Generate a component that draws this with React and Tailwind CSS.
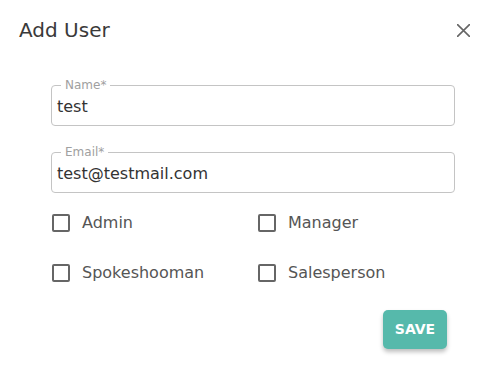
export default function App() {
  const roles = ['Admin', 'Manager', 'Spokeshooman', 'Salesperson'];

  return (
    <div className="w-[491px] h-[369px] bg-white font-['DejaVu_Sans',sans-serif] text-[#333]">
      {/* Header */}
      <div className="flex items-center justify-between pl-[19px] pr-[21px] pt-[16px]">
        <h2 className="text-[20px] leading-[28px] font-normal text-[#3a3a3a]">Add User</h2>
        <button type="button" className="w-[13px] h-[13px] flex items-center justify-center">
          <svg width="13" height="13" viewBox="0 0 13 13">
            <path d="M0.5 0.5 L12.5 12.5 M12.5 0.5 L0.5 12.5" stroke="#666" strokeWidth="1.6" strokeLinecap="round" />
          </svg>
        </button>
      </div>

      {/* Form */}
      <div className="pl-[51px] pr-[36px] pt-[41px]">
        <div className="relative h-[41px] border border-[#c4c4c4] rounded-[4px] flex items-center pl-[5px]">
          <span className="absolute left-[9px] -top-[8px] bg-white px-[4px] text-[12px] leading-[14px] text-[#a0a0a0]">Name*</span>
          <span className="text-[16px] leading-[20px] mt-[2px]">test</span>
        </div>

        <div className="relative h-[41px] mt-[26px] border border-[#c4c4c4] rounded-[4px] flex items-center pl-[5px]">
          <span className="absolute left-[9px] -top-[8px] bg-white px-[4px] text-[12px] leading-[14px] text-[#a0a0a0]">Email*</span>
          <span className="text-[16px] leading-[20px] mt-[2px]">test@testmail.com</span>
        </div>

        <div className="grid grid-cols-[206px_1fr] gap-y-[20px] mt-[15px]">
          {roles.map(role => (
            <label key={role} className="h-[30px] flex items-center pl-[1px]">
              <span className="w-[18px] h-[18px] border-2 border-[#666] rounded-[2px] shrink-0" />
              <span className="ml-[12px] text-[16px] text-[#555]">{role}</span>
            </label>
          ))}
        </div>

        <div className="flex justify-end pr-[8px] mt-[22px]">
          <button
            type="button"
            className="w-[64px] h-[39px] rounded-[5px] bg-[#56b9ab] text-white text-[14px] font-bold shadow-[0_3px_4px_rgba(0,0,0,0.25)]"
          >
            SAVE
          </button>
        </div>
      </div>
    </div>
  );
}
